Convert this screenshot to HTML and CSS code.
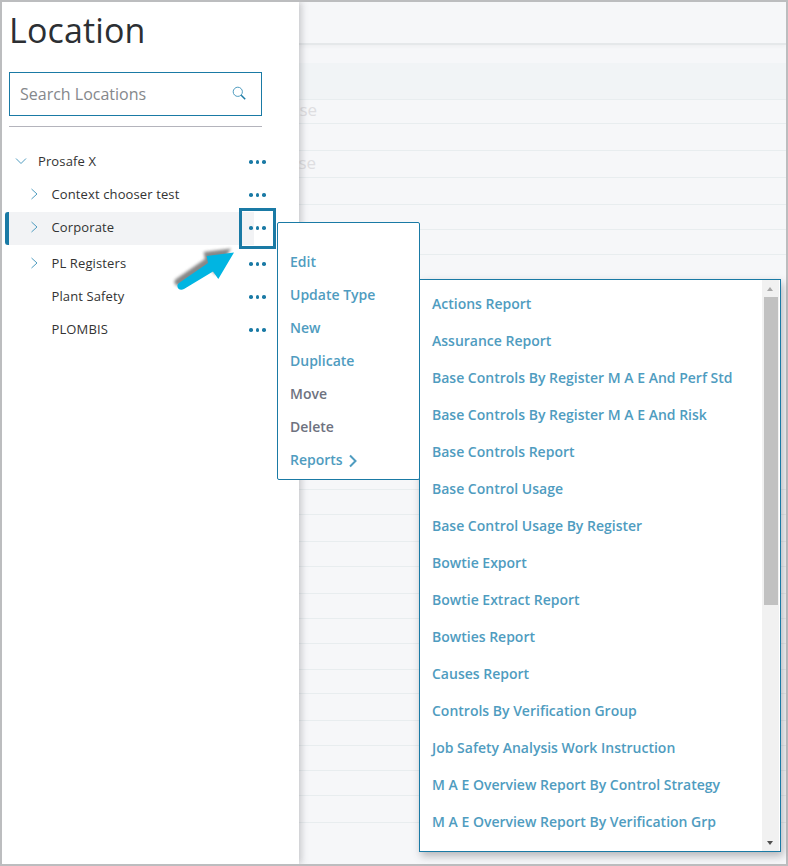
FILE: index.html
```html
<!DOCTYPE html>
<html lang="en">
<head>
<meta charset="utf-8">
<title>Location</title>
<link rel="stylesheet" href="styles.css">
</head>
<body>
<div class="frame">
  <aside class="sidebar">
    <h1 class="title">Location</h1>
    <div class="search">
      <span class="search-text">Search Locations</span>
      <svg class="search-icon" width="14" height="14" viewBox="0 0 14 14"><circle cx="5.8" cy="5.8" r="4.6" fill="none" stroke="#4f9cc0" stroke-width="1"/><path d="M9.2 9.2L13.2 13.2" stroke="#1a7aa5" stroke-width="1.5"/></svg>
    </div>
    <div class="rule"></div>
    <ul class="tree">
      <li class="node node-root">
        <svg class="chev" width="12" height="12" viewBox="0 0 12 12"><path d="M1 3.5L6 8.5L11 3.5" fill="none" stroke="#4f9cc0" stroke-width="1"/></svg>
        <span class="label">Prosafe X</span><span class="dots"><i></i><i></i><i></i></span>
      </li>
      <li class="node">
        <svg class="chev" width="12" height="12" viewBox="0 0 12 12"><path d="M2.500 1L8 6L2.500 11" fill="none" stroke="#4f9cc0" stroke-width="1"/></svg>
        <span class="label">Context chooser test</span><span class="dots"><i></i><i></i><i></i></span>
      </li>
      <li class="node node-active">
        <svg class="chev" width="12" height="12" viewBox="0 0 12 12"><path d="M2.500 1L8 6L2.500 11" fill="none" stroke="#4f9cc0" stroke-width="1"/></svg>
        <span class="label">Corporate</span><span class="dots"><i></i><i></i><i></i></span>
      </li>
      <li class="node node-gap">
        <svg class="chev" width="12" height="12" viewBox="0 0 12 12"><path d="M2.500 1L8 6L2.500 11" fill="none" stroke="#4f9cc0" stroke-width="1"/></svg>
        <span class="label">PL Registers</span><span class="dots"><i></i><i></i><i></i></span>
      </li>
      <li class="node"><span class="chev-space"></span><span class="label">Plant Safety</span><span class="dots"><i></i><i></i><i></i></span></li>
      <li class="node"><span class="chev-space"></span><span class="label">PLOMBIS</span><span class="dots"><i></i><i></i><i></i></span></li>
    </ul>
  </aside>
  <main class="main">
    <div class="topbar"></div>
    <div class="band"></div>
    <div class="row r24"><span class="ghost">use</span></div>
    <div class="row r27"></div>
    <div class="row r27"><span class="ghost ghost-b">use</span></div>
    <div class="row r27"></div>
    <div class="row r25"></div>
    <div class="row r25"></div>
    <div class="row r235"></div>
    <div class="row r25"></div>
    <div class="row r27"></div>
    <div class="row r25"></div>
    <div class="row r27"></div>
    <div class="row r25"></div>
    <div class="row r25"></div>
    <div class="row r26"></div>
    <div class="row r24"></div>
    <div class="row r27"></div>
    <div class="row r25"></div>
    <div class="row r25"></div>
    <div class="row r25"></div>
    <div class="row r27"></div>
    <div class="row r38"></div>
  </main>
</div>

<svg class="arrow" width="80" height="60" viewBox="0 0 80 60">
  <defs><filter id="sh" x="-30%" y="-30%" width="160%" height="160%"><feGaussianBlur stdDeviation="1.800"/></filter></defs>
  <path d="M8 43L37 23L35.700 16L63 12.500L47.300 39L42 31.500L13 49C8 52 4 46 8 43Z" fill="#555" opacity=".7" filter="url(#sh)" transform="translate(-3 -4)"/>
  <path d="M8 43L37 23L35.700 16L63 12.500L47.300 39L42 31.500L13 49C8 52 4 46 8 43Z" fill="#00b5e2"/>
</svg>

<div class="focus-box"><span class="focus-fill"></span><span class="dots"><i></i><i></i><i></i></span></div>

<ul class="menu">
  <li class="item">Edit</li>
  <li class="item">Update Type</li>
  <li class="item">New</li>
  <li class="item">Duplicate</li>
  <li class="item item-off">Move</li>
  <li class="item item-off">Delete</li>
  <li class="item">Reports <svg class="more" width="10" height="14" viewBox="0 0 10 14"><path d="M2 1.500L7.500 7L2 12.500" fill="none" stroke="#4f9cc0" stroke-width="2"/></svg></li>
</ul>

<div class="reports">
  <ul class="report-list">
    <li>Actions Report</li>
    <li>Assurance Report</li>
    <li>Base Controls By Register M A E And Perf Std</li>
    <li>Base Controls By Register M A E And Risk</li>
    <li>Base Controls Report</li>
    <li>Base Control Usage</li>
    <li>Base Control Usage By Register</li>
    <li>Bowtie Export</li>
    <li>Bowtie Extract Report</li>
    <li>Bowties Report</li>
    <li>Causes Report</li>
    <li>Controls By Verification Group</li>
    <li>Job Safety Analysis Work Instruction</li>
    <li>M A E Overview Report By Control Strategy</li>
    <li>M A E Overview Report By Verification Grp</li>
  </ul>
  <div class="scrollbar">
    <span class="tri tri-up"></span>
    <span class="thumb"></span>
    <span class="tri tri-down"></span>
  </div>
</div>
</body>
</html>
```
FILE: styles.css
```css
* { box-sizing: border-box; }
html, body { margin: 0; height: 100%; }
body {
  width: 788px;
  height: 866px;
  overflow: hidden;
  position: relative;
  font-family: "Open Sans", "Noto Sans", sans-serif;
  background: #f6f7f9;
}
ul { list-style: none; margin: 0; padding: 0; }

.frame {
  display: flex;
  width: 788px;
  height: 866px;
  border: 2px solid #bcbdbf;
  overflow: hidden;
}

.sidebar {
  width: 297px;
  flex: none;
  background: #fff;
  box-shadow: 2px 0 7px rgba(60, 60, 70, .28);
  position: relative;
  z-index: 1;
  padding: 0 0 0 7px;
}
.title {
  margin: 6px 0 0 0;
  font-size: 34px;
  line-height: 45px;
  font-weight: 400;
  color: #2c2f33;
  letter-spacing: .15px;
}
.search {
  margin-top: 19px;
  width: 253px;
  height: 44px;
  border: 1px solid #1a7aa5;
  display: flex;
  align-items: center;
  justify-content: space-between;
  padding: 0 15px 0 10px;
}
.search-text { font-size: 16px; color: #85888c; }
.search-icon { margin-top: -2px; }
.rule { width: 253px; height: 1px; margin-top: 10px; background: #b4b4bc; }

.tree { margin: 19px 0 0 -4px; }
.node {
  height: 33px;
  display: flex;
  align-items: center;
  padding: 0 0 4px 24px;
  width: 266px;
  position: relative;
  font-size: 13px;
  color: #333;
}
.node-root { padding-left: 10px; }
.node-root .chev { margin-right: 11px; }
.chev { flex: none; margin-right: 10.500px; }
.chev-space { width: 22.500px; flex: none; }
.label { flex: 1; letter-spacing: .12px; }
.node-active { background: linear-gradient(#f2f3f5, #f2f3f5) no-repeat 0 0 / 249px 100%; }
.node-active::before {
  content: "";
  position: absolute;
  left: 0;
  top: 0;
  bottom: 0;
  width: 4px;
  background: #1a7aa5;
  border-radius: 3px 0 0 3px;
}
.node-gap { margin-top: 3px; }
.dots { display: inline-flex; gap: 3px; margin-right: 1px; }
.dots i { width: 3.500px; height: 3.500px; border-radius: 50%; background: #1a7aa5; display: block; }
.node .dots { position: absolute; left: 244px; top: 14px; }

.main { flex: 1; min-width: 0; }
.topbar { height: 43px; border-bottom: 2px solid #e5e8ea; box-shadow: 0 2px 4px rgba(0,0,0,.03); margin-bottom: 18px; }
.band { height: 36px; background: #f1f4f6; }
.row { border-top: 1px solid #e8edef; position: relative; font-size: 17px; color: #dedee1; }
.r24 { height: 24px; }
.r25 { height: 25px; }
.r26 { height: 26px; }
.r27 { height: 27px; }
.r38 { height: 38px; }
.r235 { height: 235px; }
.ghost { position: absolute; left: -10px; top: 0; line-height: 20px; }
.ghost-b { left: -11px; top: 2px; }

.arrow { position: absolute; left: 171px; top: 240px; z-index: 2; }

.focus-box {
  position: absolute;
  left: 239px;
  top: 208px;
  width: 37px;
  height: 41px;
  border: 3px solid #1a7aa5;
  background: #fff;
  z-index: 2;
}
.focus-fill { position: absolute; left: 0; top: 1px; bottom: 1px; width: 12px; background: #f2f3f5; }
.focus-box .dots { position: absolute; left: 7px; top: 15px; }

.menu {
  position: absolute;
  left: 277px;
  top: 222px;
  width: 143px;
  height: 258px;
  padding-top: 22px;
  background: #fff;
  border: 1px solid #1a7aa5;
  border-radius: 2px;
  z-index: 4;
}
.item {
  height: 33px;
  line-height: 33px;
  padding-left: 12px;
  font-size: 14px;
  font-weight: 600;
  color: #4f9cc0;
  display: flex;
  align-items: center;
  gap: 5px;
}
.item-off { color: #6e7280; }
.more { margin-top: 2px; }

.reports {
  position: absolute;
  left: 419px;
  top: 279px;
  width: 362px;
  height: 573px;
  background: #fff;
  border: 1px solid #1a7aa5;
  box-shadow: 2px 4px 8px rgba(60, 60, 70, .35);
  z-index: 3;
  display: flex;
}
.report-list { flex: 1; padding: 5px 0 0 12px; }
.report-list li {
  height: 37px;
  line-height: 37px;
  font-size: 14px;
  font-weight: 600;
  color: #4f9cc0;
  white-space: nowrap;
}
.scrollbar {
  width: 17px;
  margin-right: 1px;
  background: #f1f1f1;
  position: relative;
  display: flex;
  flex-direction: column;
  align-items: center;
}
.thumb { position: absolute; left: 2px; right: 1px; top: 17px; height: 308px; background: #c1c1c1; }
.tri { position: absolute; left: 5px; width: 0; height: 0; border-left: 3.500px solid transparent; border-right: 3.500px solid transparent; }
.tri-up { top: 7px; border-bottom: 4px solid #a8a8a8; }
.tri-down { bottom: 6px; border-top: 4px solid #505050; }
```
